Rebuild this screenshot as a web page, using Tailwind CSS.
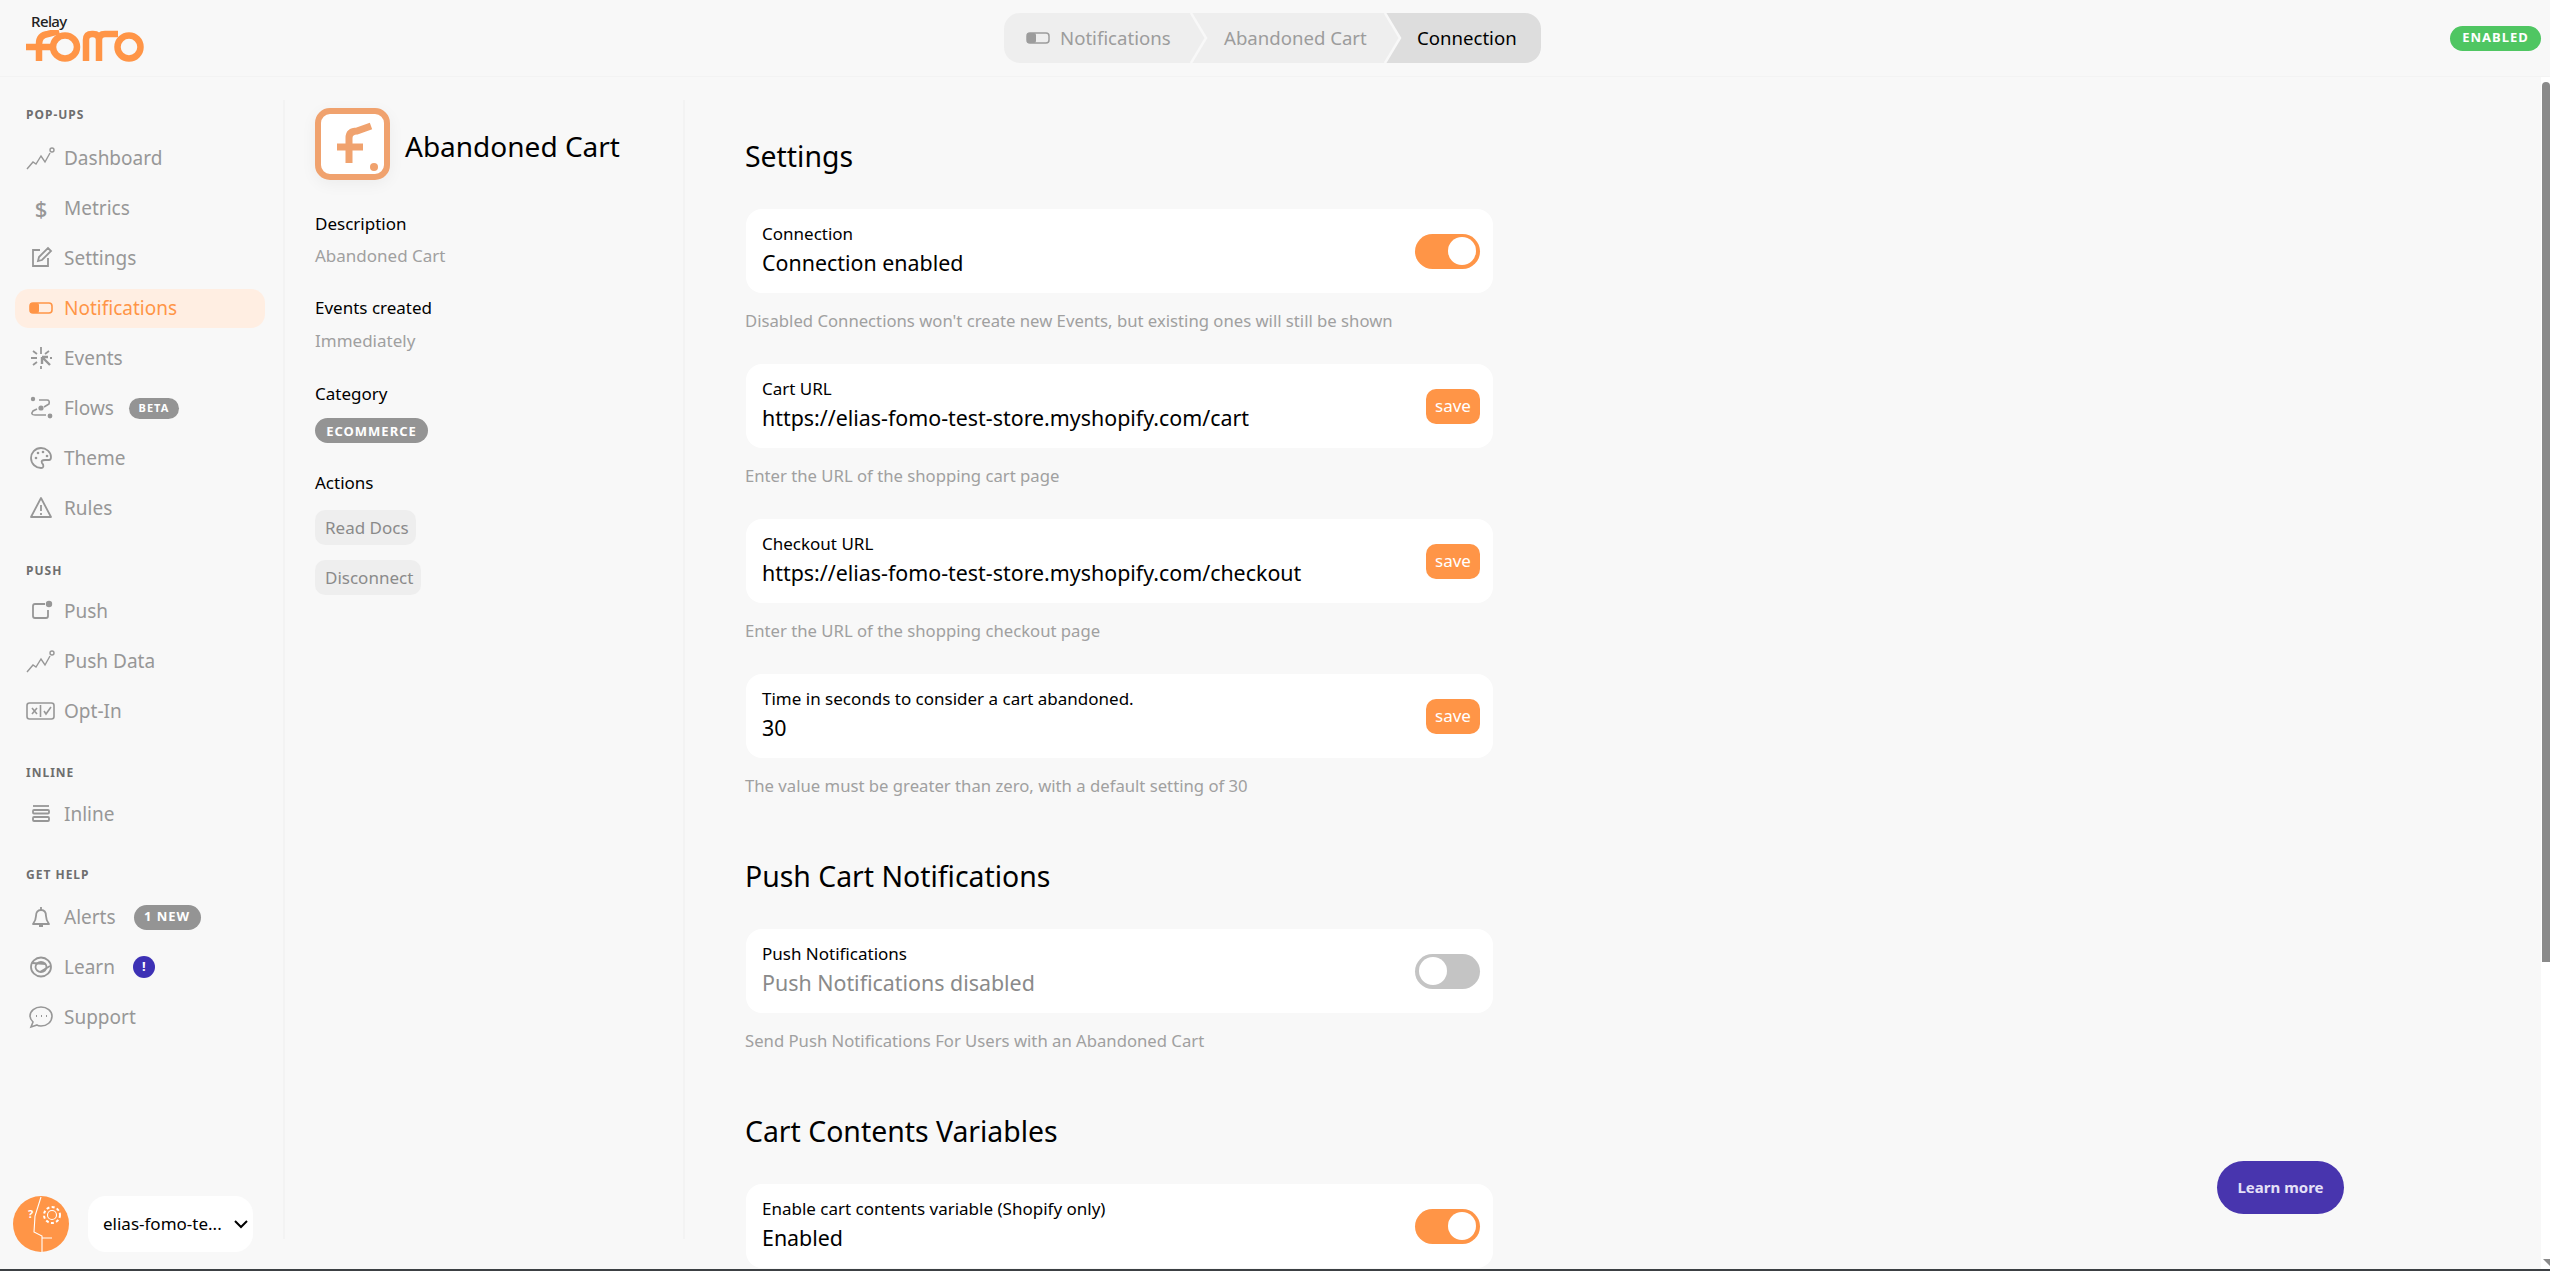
<!DOCTYPE html>
<html lang="en">
<head>
    <meta charset="UTF-8">
    <title>Abandoned Cart</title>
    <script src="https://cdn.jsdelivr.net/npm/@tailwindcss/browser@4"></script>
</head>
<body class="bg-[#f8f8f8] h-screen overflow-hidden flex flex-col [font-family:'Noto_Sans',sans-serif] text-black">
    <!-- Header -->
    <header class="relative h-[77px] shrink-0 border-b border-[#f3f3f3] flex items-center justify-between">
        <div class="pl-[26px] w-[200px]">
            <div class="pl-[5px] h-[16px] text-[15px] leading-[16px] font-medium text-[#222] tracking-[-0.6px]">Relay</div>
            <svg class="mt-[1px]" width="118" height="33" viewBox="0 0 118 33" fill="none" stroke="#ff9547" stroke-width="6.5">
                <path d="M0 17H25"/>
                <path d="M13 31V14Q13 5 22 4L33 1"/>
                <ellipse cx="39" cy="17" rx="12" ry="11.5"/>
                <path d="M60 31V10Q60 4 66 4H67Q73 4 73 10V31M73 10Q73 4 79 4H92"/>
                <ellipse cx="103" cy="17" rx="11.5" ry="11.5"/>
            </svg>
        </div>
        <!-- Stepper -->
        <nav class="absolute left-[1004px] top-[13px] h-[50px] flex text-[18.6px] rounded-[16px] overflow-hidden">
            <div class="w-[186px] bg-[#eeeeee] flex items-center pl-[22px] text-[#9c9c9c]">
                <svg width="24" height="12" viewBox="0 0 24 12" fill="none"><rect x="1" y="1" width="22" height="10" rx="3" stroke="#9c9c9c" stroke-width="1.5"/><rect x="1" y="1" width="9" height="10" rx="2" fill="#9c9c9c"/></svg>
                <span class="ml-[10px]">Notifications</span>
            </div>
            <svg width="19" height="50" viewBox="0 0 19 50"><rect width="19" height="50" fill="#eeeeee"/><path d="M1 0L16 25L1 50" fill="none" stroke="#f8f8f8" stroke-width="2.5"/></svg>
            <div class="w-[175px] bg-[#eeeeee] flex items-center pl-[15px] text-[#9c9c9c]">Abandoned Cart</div>
            <svg width="19" height="50" viewBox="0 0 19 50"><rect width="19" height="50" fill="#dddddd"/><path d="M0 0H1L16 25L1 50H0Z" fill="#eeeeee"/><path d="M1 0L16 25L1 50" fill="none" stroke="#f8f8f8" stroke-width="2.5"/></svg>
            <div class="w-[138px] bg-[#dddddd] flex items-center pl-[14px] text-black">Connection</div>
        </nav>
        <span class="mr-[9px] h-[25px] w-[91px] rounded-full bg-[#4fc662] text-white text-[13px] font-bold tracking-[1px] flex items-center justify-center">ENABLED</span>
    </header>

    <div class="relative flex-1 min-h-0 flex">
        <!-- Sidebar -->
        <aside class="w-[283px] shrink-0 flex flex-col text-[#979797] text-[19px]">
            <div class="pl-[26px] pt-[29px] mb-[16px] h-[40px] text-[12px] leading-[18px] font-bold tracking-[1px] text-[#6e6e6e]">POP-UPS</div>
            <a class="flex items-center h-[50px] pl-[26px]">
                <svg class="w-[30px] mr-[8px]" height="30" viewBox="0 0 30 30" fill="none" stroke="#979797" stroke-width="1.4"><path d="M1 26L7 19L10 21L15 13L19 19L24 10"/><circle cx="26" cy="7" r="2"/></svg>Dashboard</a>
            <a class="flex items-center h-[50px] pl-[26px]">
                <span class="w-[30px] mr-[8px] text-center text-[22px] font-medium">$</span>Metrics</a>
            <a class="flex items-center h-[50px] pl-[26px]">
                <svg class="w-[30px] mr-[8px]" height="30" viewBox="0 0 30 30" fill="none" stroke="#979797" stroke-width="1.8"><path d="M14 7H7V23H22V15"/><path d="M12 18L13 14L22 5L25 8L16 17Z"/></svg>Settings</a>
            <a class="flex items-center h-[39px] my-[5.5px] ml-[15px] w-[250px] pl-[11px] rounded-[14px] bg-[#ffeee2] text-[#ff9547]">
                <svg class="w-[30px] mr-[8px]" height="30" viewBox="0 0 30 30" fill="none"><rect x="4" y="10" width="22" height="10" rx="3" stroke="#ff9547" stroke-width="1.6"/><rect x="4" y="10" width="9" height="10" rx="2" fill="#ff9547"/></svg>Notifications</a>
            <a class="flex items-center h-[50px] pl-[26px]">
                <svg class="w-[30px] mr-[8px]" height="30" viewBox="0 0 30 30" fill="none" stroke="#979797" stroke-width="1.8"><path d="M15 4V11M15 23V26M5 15H11M24 15H26M7 8L11 11M23 8L19 11M7 22L11 19"/><path d="M16 14L24 22M16 14V21M16 14H22" stroke-width="2.4"/></svg>Events</a>
            <a class="flex items-center h-[50px] pl-[26px]">
                <svg class="w-[30px] mr-[8px]" height="30" viewBox="0 0 30 30" fill="none" stroke="#979797" stroke-width="1.6"><circle cx="7" cy="6" r="2.2" fill="#979797" stroke="none"/><circle cx="15" cy="15" r="2.6" fill="#979797" stroke="none"/><circle cx="24" cy="23" r="2.4" fill="#979797" stroke="none"/><path d="M13 7H21Q24 7 23 11L18 14M11 16L7 18Q4 22 9 22H20"/></svg>Flows<span class="ml-[15px] h-[21px] w-[50px] rounded-full bg-[#949494] text-white text-[11px] font-bold tracking-[1px] flex items-center justify-center">BETA</span></a>
            <a class="flex items-center h-[50px] pl-[26px]">
                <svg class="w-[30px] mr-[8px]" height="30" viewBox="0 0 30 30" fill="none" stroke="#979797" stroke-width="1.8"><path d="M15 5C9 5 5 10 5 15C5 21 10 25 15 25C18 25 18 22 16 20C15 18 16 17 19 17H23C25 17 25 15 25 14C25 9 20 5 15 5Z"/><circle cx="10" cy="15" r="1.3" fill="#979797" stroke="none"/><circle cx="12" cy="10" r="1.3" fill="#979797" stroke="none"/><circle cx="17" cy="9" r="1.3" fill="#979797" stroke="none"/><circle cx="21" cy="13" r="1.3" fill="#979797" stroke="none"/></svg>Theme</a>
            <a class="flex items-center h-[50px] pl-[26px]">
                <svg class="w-[30px] mr-[8px]" height="30" viewBox="0 0 30 30" fill="none" stroke="#979797" stroke-width="1.8"><path d="M15 5L25 24H5Z" stroke-linejoin="round"/><path d="M15 12V18M15 20V22"/></svg>Rules</a>

            <div class="pl-[26px] pt-[29px] mb-[10px] h-[43px] text-[12px] leading-[18px] font-bold tracking-[1px] text-[#6e6e6e]">PUSH</div>
            <a class="flex items-center h-[50px] pl-[26px]">
                <svg class="w-[30px] mr-[8px]" height="30" viewBox="0 0 30 30" fill="none" stroke="#979797" stroke-width="1.8"><path d="M19 8H9Q7 8 7 10V20Q7 22 9 22H20Q22 22 22 20V14"/><circle cx="23" cy="8" r="3.2" fill="#979797" stroke="none"/></svg>Push</a>
            <a class="flex items-center h-[50px] pl-[26px]">
                <svg class="w-[30px] mr-[8px]" height="30" viewBox="0 0 30 30" fill="none" stroke="#979797" stroke-width="1.4"><path d="M1 26L7 19L10 21L15 13L19 19L24 10"/><circle cx="26" cy="7" r="2"/></svg>Push Data</a>
            <a class="flex items-center h-[50px] pl-[26px]">
                <svg class="w-[30px] mr-[8px]" height="30" viewBox="0 0 30 30" fill="none" stroke="#979797" stroke-width="1.6"><rect x="1" y="7" width="27" height="16" rx="2.5"/><path d="M14.5 9V21M6 12L11 18M11 12L6 18M18 15L20 18L25 11"/></svg>Opt-In</a>

            <div class="pl-[26px] pt-[28px] mb-[8px] h-[45px] text-[12px] leading-[18px] font-bold tracking-[1px] text-[#6e6e6e]">INLINE</div>
            <a class="flex items-center h-[50px] pl-[26px]">
                <svg class="w-[30px] mr-[8px]" height="30" viewBox="0 0 30 30" fill="none" stroke="#979797" stroke-width="1.8"><path d="M7 7H23"/><rect x="7" y="11" width="16" height="3.5" rx="1"/><rect x="7" y="18" width="16" height="4" rx="1"/></svg>Inline</a>

            <div class="pl-[26px] pt-[27px] mb-[8px] h-[45px] text-[12px] leading-[18px] font-bold tracking-[1px] text-[#6e6e6e]">GET HELP</div>
            <a class="flex items-center h-[50px] pl-[26px]">
                <svg class="w-[30px] mr-[8px]" height="30" viewBox="0 0 30 30" fill="none" stroke="#979797" stroke-width="1.8"><path d="M7 22Q10 18 10 14Q10 8 15 8Q20 8 20 14Q20 18 23 22Z" stroke-linejoin="round"/><path d="M15 5V8M13 24H17"/></svg>Alerts<span class="ml-[18px] h-[25px] w-[67px] rounded-full bg-[#949494] text-white text-[13px] font-bold tracking-[1px] flex items-center justify-center">1 NEW</span></a>
            <a class="flex items-center h-[50px] pl-[26px]">
                <svg class="w-[30px] mr-[8px]" height="30" viewBox="0 0 30 30" fill="none" stroke="#979797" stroke-width="1.8"><ellipse cx="15" cy="15" rx="10" ry="9.5"/><ellipse cx="15" cy="15" rx="5.5" ry="5"/><path d="M6 11L20 12M24 14L14 20"/></svg>Learn<span class="ml-[18px] w-[22px] h-[22px] rounded-full bg-[#3d31b5] text-white text-[13px] font-bold flex items-center justify-center">!</span></a>
            <a class="flex items-center h-[50px] pl-[26px]">
                <svg class="w-[30px] mr-[8px]" height="30" viewBox="0 0 30 30" fill="none" stroke="#979797" stroke-width="1.6"><path d="M15 5C9 5 4 9 4 14C4 17 6 19 7 20L5 25L11 23C12 24 14 24 15 24C21 24 26 20 26 14C26 9 21 5 15 5Z"/><path d="M10 14H11M15 14H16M20 14H21" stroke-width="2"/></svg>Support</a>

            <!-- Account switcher -->
            <div class="mt-auto mb-[17px] ml-[13px] flex items-center">
                <svg width="56" height="56" viewBox="0 0 56 56" fill="none" stroke="#fff" stroke-width="1.1"><circle cx="28" cy="28" r="28" fill="#ff9547" stroke="none"/><path d="M28 1L22 20L21 36L29 40V56M29 42H39"/><circle cx="39" cy="19" r="4.5"/><circle cx="39" cy="19" r="8" stroke-dasharray="3 2.3" stroke-width="2"/><text x="15" y="22" fill="#fff" stroke="none" font-size="11" font-weight="700">?</text></svg>
                <button class="ml-[19px] w-[165px] h-[56px] bg-white rounded-[18px] flex items-center pl-[15px] text-[17px] text-black whitespace-nowrap">elias-fomo-te...<svg class="ml-[12px]" width="14" height="9" viewBox="0 0 14 9" fill="none" stroke="#000" stroke-width="2"><path d="M1 1L7 7L13 1"/></svg></button>
            </div>
        </aside>

        <!-- Connection details -->
        <section class="w-[402px] shrink-0 mt-[23px] mb-[30px] border-x-2 border-[#f3f3f3] pl-[30px] pt-[8px] text-[17px] leading-[24px]">
            <div class="flex items-center">
                <div class="w-[75px] h-[72px] rounded-[15px] border-[6px] border-[#f0a26e] bg-white shadow-[0_4px_16px_rgba(0,0,0,0.05)] flex items-center justify-center">
                    <svg width="63" height="60" viewBox="0 0 63 60" fill="none" stroke="#f0a26e" stroke-width="7"><path d="M16 33H42"/><path d="M28 49V24Q28 17 36 17L50 12"/><circle cx="53" cy="53" r="4" fill="#f0a26e" stroke="none"/></svg>
                </div>
                <h1 class="ml-[15px] mt-[3px] text-[28px]">Abandoned Cart</h1>
            </div>
            <h3 class="mt-[32px]">Description</h3>
            <p class="mt-[8px] text-[#a0a0a0]">Abandoned Cart</p>
            <h3 class="mt-[28px]">Events created</h3>
            <p class="mt-[9px] text-[#a0a0a0]">Immediately</p>
            <h3 class="mt-[29px]">Category</h3>
            <span class="mt-[12px] flex w-[113px] h-[25px] rounded-full bg-[#949494] text-white text-[13px] font-bold tracking-[1px] items-center justify-center">ECOMMERCE</span>
            <h3 class="mt-[28px]">Actions</h3>
            <button class="block mt-[15px] h-[35px] px-[10px] w-[101px] text-left rounded-[10px] bg-[#eeeeee] text-[#8a8a8a] whitespace-nowrap">Read Docs</button>
            <button class="block mt-[15px] h-[35px] px-[10px] w-[106px] text-left rounded-[10px] bg-[#eeeeee] text-[#8a8a8a] whitespace-nowrap">Disconnect</button>
        </section>

        <!-- Settings -->
        <main class="flex-1 min-w-0 pl-[60px] pt-[60px] overflow-hidden">
            <h2 class="h-[40px] leading-[38px] text-[28.4px]">Settings</h2>
            <div class="mt-[32px] ml-[1px] w-[747px] h-[84px] bg-white rounded-[16px] pl-[16px] pr-[13px] flex items-center justify-between">
                <div class="pb-[3px]"><div class="text-[17px] leading-[24px]">Connection</div><div class="mt-[3px] text-[21.4px] leading-[28px]">Connection enabled</div></div>
                <div class="w-[65px] h-[35px] rounded-full bg-[#ff9547] flex items-center justify-end pr-[4px]"><span class="w-[28px] h-[28px] rounded-full bg-white"></span></div>
            </div>
            <p class="mt-[13px] h-[30px] leading-[30px] text-[16.7px] text-[#a0a0a0]">Disabled Connections won't create new Events, but existing ones will still be shown</p>
            <div class="mt-[28px] ml-[1px] w-[747px] h-[84px] bg-white rounded-[16px] pl-[16px] pr-[13px] flex items-center justify-between">
                <div class="pb-[3px]"><div class="text-[17px] leading-[24px]">Cart URL</div><div class="mt-[3px] text-[21.4px] leading-[28px]">https://elias-fomo-test-store.myshopify.com/cart</div></div>
                <button class="w-[54px] h-[35px] rounded-[10px] bg-[#ff9547] text-white text-[17px]">save</button>
            </div>
            <p class="mt-[13px] h-[30px] leading-[30px] text-[16.7px] text-[#a0a0a0]">Enter the URL of the shopping cart page</p>
            <div class="mt-[28px] ml-[1px] w-[747px] h-[84px] bg-white rounded-[16px] pl-[16px] pr-[13px] flex items-center justify-between">
                <div class="pb-[3px]"><div class="text-[17px] leading-[24px]">Checkout URL</div><div class="mt-[3px] text-[21.4px] leading-[28px]">https://elias-fomo-test-store.myshopify.com/checkout</div></div>
                <button class="w-[54px] h-[35px] rounded-[10px] bg-[#ff9547] text-white text-[17px]">save</button>
            </div>
            <p class="mt-[13px] h-[30px] leading-[30px] text-[16.7px] text-[#a0a0a0]">Enter the URL of the shopping checkout page</p>
            <div class="mt-[28px] ml-[1px] w-[747px] h-[84px] bg-white rounded-[16px] pl-[16px] pr-[13px] flex items-center justify-between">
                <div class="pb-[3px]"><div class="text-[17px] leading-[24px]">Time in seconds to consider a cart abandoned.</div><div class="mt-[3px] text-[21.4px] leading-[28px]">30</div></div>
                <button class="w-[54px] h-[35px] rounded-[10px] bg-[#ff9547] text-white text-[17px]">save</button>
            </div>
            <p class="mt-[13px] h-[30px] leading-[30px] text-[16.7px] text-[#a0a0a0]">The value must be greater than zero, with a default setting of 30</p>

            <h2 class="mt-[56px] h-[40px] leading-[38px] text-[28.4px]">Push Cart Notifications</h2>
            <div class="mt-[32px] ml-[1px] w-[747px] h-[84px] bg-white rounded-[16px] pl-[16px] pr-[13px] flex items-center justify-between">
                <div class="pb-[3px]"><div class="text-[17px] leading-[24px]">Push Notifications</div><div class="mt-[3px] text-[21.4px] leading-[28px] text-[#8a8a8a]">Push Notifications disabled</div></div>
                <div class="w-[65px] h-[35px] rounded-full bg-[#c4c4c4] flex items-center pl-[4px]"><span class="w-[28px] h-[28px] rounded-full bg-white"></span></div>
            </div>
            <p class="mt-[13px] h-[30px] leading-[30px] text-[16.7px] text-[#a0a0a0]">Send Push Notifications For Users with an Abandoned Cart</p>

            <h2 class="mt-[56px] h-[40px] leading-[38px] text-[28.4px]">Cart Contents Variables</h2>
            <div class="mt-[32px] ml-[1px] w-[747px] h-[84px] bg-white rounded-[16px] pl-[16px] pr-[13px] flex items-center justify-between">
                <div class="pb-[3px]"><div class="text-[17px] leading-[24px]">Enable cart contents variable (Shopify only)</div><div class="mt-[3px] text-[21.4px] leading-[28px]">Enabled</div></div>
                <div class="w-[65px] h-[35px] rounded-full bg-[#ff9547] flex items-center justify-end pr-[4px]"><span class="w-[28px] h-[28px] rounded-full bg-white"></span></div>
            </div>
        </main>

        <!-- Scrollbar -->
        <div class="w-[9px] shrink-0 bg-white relative">
            <div class="absolute left-[1px] right-0 top-[5px] h-[880px] bg-[#8a8a8a] rounded-t-[4px]"></div>
            <svg class="absolute right-0 bottom-[3px]" width="7" height="7" viewBox="0 0 7 7"><path d="M0 0H7V7Z" fill="#8a8a8a"/></svg>
        </div>

        <button class="absolute left-[2217px] top-[1084px] w-[127px] h-[53px] rounded-full bg-[#4835ae] text-[#e4e0f7] text-[15px] font-bold">Learn more</button>
    </div>
    <div class="h-[2px] shrink-0 bg-[#3c4043]"></div>
</body>
</html>
